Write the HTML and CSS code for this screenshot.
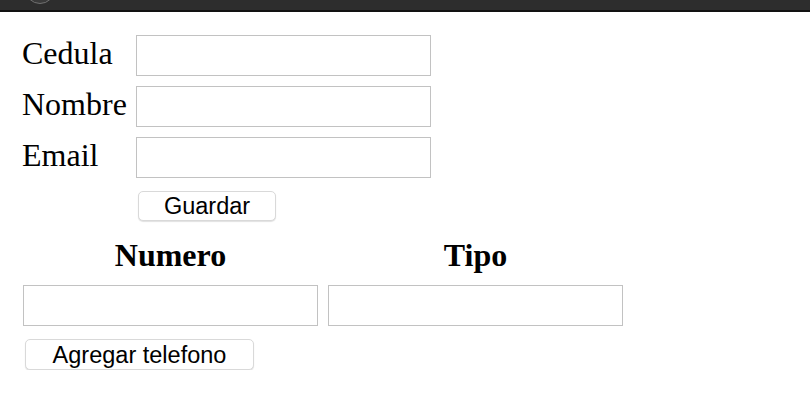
FILE: index.html
```html
<!DOCTYPE html>
<html lang="es">
<head>
<meta charset="utf-8">
<title>Formulario</title>
<link rel="stylesheet" href="styles.css">
</head>
<body>
<div class="topbar"><span class="topbar-knob"></span></div>
<form class="person">
  <label class="label" for="cedula">Cedula</label>
  <input class="field" id="cedula" type="text">
  <label class="label" for="nombre">Nombre</label>
  <input class="field" id="nombre" type="text">
  <label class="label" for="email">Email</label>
  <input class="field" id="email" type="text">
  <span></span>
  <button class="btn btn-save" type="button">Guardar</button>
</form>
<div class="phones">
  <div class="phones-grid">
    <div class="head">Numero</div>
    <div class="head">Tipo</div>
    <input class="field" type="text">
    <input class="field" type="text">
  </div>
  <button class="btn btn-add" type="button">Agregar telefono</button>
</div>
</body>
</html>
```
FILE: styles.css
```css
html, body {
  margin: 0;
  padding: 0;
  background: #ffffff;
}
body {
  font-family: "Liberation Serif", "Times New Roman", serif;
  color: #000;
}
.topbar {
  position: relative;
  height: 10px;
  background: #2d2d2d;
  border-bottom: 2px solid #121212;
  overflow: hidden;
}
.topbar-knob {
  position: absolute;
  left: 25px;
  top: -26px;
  width: 28px;
  height: 28px;
  border-radius: 50%;
  background: #3a3a3a;
  border: 1px solid #707070;
}
.person {
  display: grid;
  grid-template-columns: 114px 295px;
  row-gap: 10px;
  padding: 23px 0 0 22px;
  margin: 0;
}
.label {
  font-size: 32px;
  line-height: 37px;
  align-self: start;
  white-space: nowrap;
}
.field {
  box-sizing: border-box;
  height: 41px;
  width: 295px;
  margin: 0;
  border: 1px solid #c2c2c2;
  background: #fff;
  padding: 0 4px;
  font-size: 16px;
  outline: none;
}
.btn {
  box-sizing: border-box;
  margin: 0;
  padding: 2px 0 0;
  background: #ffffff;
  border: 1px solid #d9d9d9;
  border-radius: 5px;
  box-shadow: 0 1px 1px rgba(0, 0, 0, 0.12);
  font-family: "Liberation Sans", Arial, sans-serif;
  font-size: 23.5px;
  color: #000;
  line-height: 1;
}
.btn-save {
  width: 138px;
  height: 30px;
  margin: 3px 0 0 2px;
}
.phones {
  padding: 16px 0 0 23px;
}
.phones-grid {
  display: grid;
  grid-template-columns: 295px 295px;
  column-gap: 10px;
  row-gap: 11px;
}
.head {
  font-size: 32px;
  font-weight: bold;
  line-height: 37px;
  text-align: center;
}
.btn-add {
  width: 229px;
  height: 31px;
  margin: 13px 0 0 2px;
}
```
